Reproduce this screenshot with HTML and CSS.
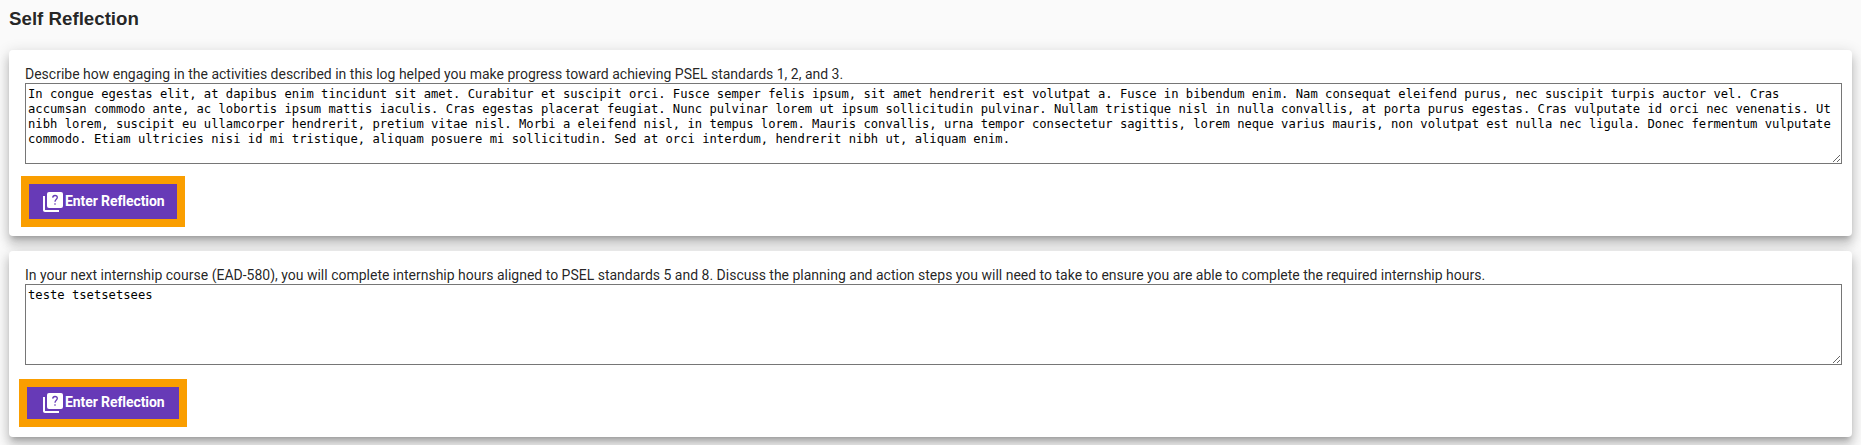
FILE: index.html
```
<!DOCTYPE html>
<html lang="en">
<head>
  <meta charset="UTF-8" />
  <meta name="viewport" content="width=device-width, initial-scale=1.0"/>
  <title>Self Reflection</title>
  <link rel="stylesheet" href="styles.css">
</head>
<body>
  <h2>Self Reflection</h2>

  <div class="card">
    <label for="reflection1">Describe how engaging in the activities described in this log helped you make progress toward achieving PSEL standards 1, 2, and 3.</label>
    <textarea id="reflection1" rows="5" spellcheck="false">In congue egestas elit, at dapibus enim tincidunt sit amet. Curabitur et suscipit orci. Fusce semper felis ipsum, sit amet hendrerit est volutpat a. Fusce in bibendum enim. Nam consequat eleifend purus, nec suscipit turpis auctor vel. Cras accumsan commodo ante, ac lobortis ipsum mattis iaculis. Cras egestas placerat feugiat. Nunc pulvinar lorem ut ipsum sollicitudin pulvinar. Nullam tristique nisl in nulla convallis, at porta purus egestas. Cras vulputate id orci nec venenatis. Ut nibh lorem, suscipit eu ullamcorper hendrerit, pretium vitae nisl. Morbi a eleifend nisl, in tempus lorem. Mauris convallis, urna tempor consectetur sagittis, lorem neque varius mauris, non volutpat est nulla nec ligula. Donec fermentum vulputate commodo. Etiam ultricies nisi id mi tristique, aliquam posuere mi sollicitudin. Sed at orci interdum, hendrerit nibh ut, aliquam enim.</textarea>
    <button class="enter-btn">
      <svg class="icon" viewBox="0 0 24 24">
        <path d="M4 6H2v14c0 1.100.9 2 2 2h14v-2H4V6z"/>
        <rect x="6" y="2" width="16" height="16" rx="2"/>
        <path class="mark" d="M11.700 7.600c.1-1.300 1-2.100 2.300-2.100s2.300.8 2.300 2c0 1.700-2.300 1.900-2.300 4.300M14 13.300v1.500"/>
      </svg>
      <span>Enter Reflection</span>
    </button>
  </div>

  <div class="card">
    <label for="reflection2">In your next internship course (EAD-580), you will complete internship hours aligned to PSEL standards 5 and 8. Discuss the planning and action steps you will need to take to ensure you are able to complete the required internship hours.</label>
    <textarea id="reflection2" rows="5" spellcheck="false">teste tsetsetsees</textarea>
    <button class="enter-btn enter-btn-wide">
      <svg class="icon" viewBox="0 0 24 24">
        <path d="M4 6H2v14c0 1.100.9 2 2 2h14v-2H4V6z"/>
        <rect x="6" y="2" width="16" height="16" rx="2"/>
        <path class="mark" d="M11.700 7.600c.1-1.300 1-2.100 2.300-2.100s2.300.8 2.300 2c0 1.700-2.300 1.900-2.300 4.300M14 13.300v1.500"/>
      </svg>
      <span>Enter Reflection</span>
    </button>
  </div>
</body>
</html>
```
FILE: styles.css
```
body {
  margin: 0;
  padding: 0 9px;
  height: 445px;
  overflow: hidden;
  box-sizing: border-box;
  background: #fafafa;
  font-family: Roboto, sans-serif;
  font-size: 14px;
  color: rgba(0, 0, 0, 0.87);
}

h2 {
  margin: 0;
  padding-top: 9px;
  height: 41px;
  font-family: "Liberation Sans", Arial, sans-serif;
  font-size: 18.72px;
  line-height: 20px;
}

.card {
  box-sizing: border-box;
  height: 186px;
  margin-bottom: 15px;
  padding: 16px;
  background: #fff;
  border-radius: 4px;
  box-shadow: 0 5px 5px -3px rgba(0, 0, 0, 0.2),
    0 8px 10px 1px rgba(0, 0, 0, 0.14),
    0 3px 14px 2px rgba(0, 0, 0, 0.12);
}

.card label {
  display: block;
  height: 17px;
  line-height: 17px;
  letter-spacing: -0.004px;
  white-space: nowrap;
}

.card textarea {
  display: block;
  width: 100%;
  height: 74px;
  margin: 0;
  padding: 3px 2px 2px;
  border: 1px solid #767676;
  font-family: "DejaVu Sans Mono", monospace;
  font-size: 12.188px;
  line-height: 15px;
  color: #000;
}

.enter-btn {
  display: flex;
  align-items: center;
  box-sizing: border-box;
  width: 164px;
  height: 51px;
  margin: 12px 0 0 -4px;
  padding: 0 0 1px 12px;
  border: 8px solid #fa9e00;
  background: #673ab7;
  color: #fff;
  font-family: Roboto, sans-serif;
  font-size: 14px;
  font-weight: 700;
  letter-spacing: -0.09px;
  white-space: nowrap;
  cursor: pointer;
}

.enter-btn-wide {
  width: 168px;
  height: 48px;
  margin: 14px 0 0 -6px;
  padding: 0 0 2px 14px;
}

.icon {
  width: 24px;
  height: 24px;
  margin-top: 2px;
  flex: none;
  fill: #fff;
}

.icon .mark {
  fill: none;
  stroke: #673ab7;
  stroke-width: 1.3;
}
```
